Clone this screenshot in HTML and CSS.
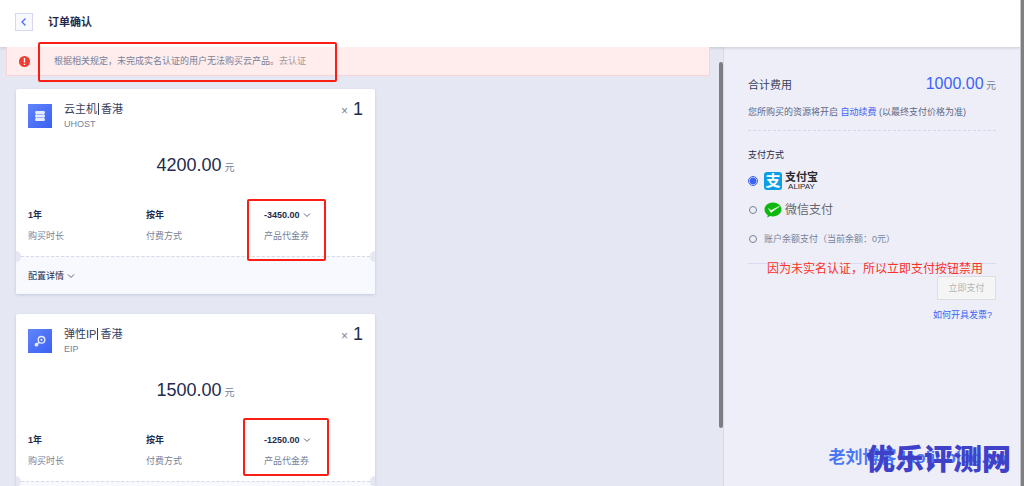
FILE: index.html
```html
<!DOCTYPE html>
<html lang="zh-CN">

<head>
    <meta charset="UTF-8">
    <meta name="viewport" content="width=device-width, initial-scale=1.0">
    <title>订单确认</title>
    <link rel="stylesheet" href="styles.css">
</head>

<body>
    <div class="page">
        <div class="header">
            <button type="button" class="back" aria-label="返回">
                <svg width="8" height="10" viewBox="0 0 8 10"><path d="M5.5 1.5 2 5l3.5 3.5" fill="none" stroke="#4a70f5" stroke-width="1.3"/></svg>
            </button>
            <h1>订单确认</h1>
        </div>
        <div class="container">
            <!-- 左侧订单列表 -->
            <div class="main">
                <div class="alert">
                    <svg class="alert-icon" width="11" height="11" viewBox="0 0 11 11"><circle cx="5.5" cy="5.5" r="5.5" fill="#f23c32"/><path d="M5.5 2v4.600M5.5 7.700v1.200" stroke="#fff" stroke-width="1.4"/></svg>
                    <p>根据相关规定，未完成实名认证的用户无法购买云产品。<a href="#">去认证</a></p>
                    <div class="mark mark-alert"></div>
                </div>
                <div class="list">
                    <div class="card">
                        <div class="card-body">
                            <div class="card-head">
                                <div class="icon">
                                    <svg width="24" height="24" viewBox="0 0 24 24"><g fill="#e6ecff"><rect x="7" y="7" width="10" height="3" rx="1.5"/><rect x="7" y="10.500" width="10" height="3" rx="1.500"/><rect x="7" y="14" width="10" height="3" rx="1.500"/></g><path d="M8.500 7v10M15.500 7v10" stroke="#e6ecff" stroke-width="1.200" opacity=".7"/></svg>
                                </div>
                                <div class="name">
                                    <h2>云主机<i></i>香港</h2>
                                    <p>UHOST</p>
                                </div>
                                <div class="count"><span>×</span> 1</div>
                            </div>
                            <div class="price">4200.00 <span>元</span></div>
                            <div class="info">
                                <div><b>1年</b><p>购买时长</p></div>
                                <div><b>按年</b><p>付费方式</p></div>
                                <div class="coupon">
                                    <button type="button">-3450.00 <svg width="8" height="6" viewBox="0 0 8 6"><path d="M1 1.500 4 4.500 7 1.500" fill="none" stroke="#5c6784"/></svg></button>
                                    <p>产品代金券</p>
                                    <div class="mark mark-host"></div>
                                </div>
                            </div>
                        </div>
                        <div class="card-foot">
                            <button type="button">配置详情 <svg width="8" height="6" viewBox="0 0 8 6"><path d="M1 1.500 4 4.500 7 1.500" fill="none" stroke="#5c6784"/></svg></button>
                        </div>
                    </div>
                    <div class="card">
                        <div class="card-body">
                            <div class="card-head">
                                <div class="icon">
                                    <svg width="24" height="24" viewBox="0 0 24 24"><g fill="none" stroke="#e6ecff" stroke-width="1.4"><circle cx="13.500" cy="10.800" r="3.300"/><path d="M11.100 13.200 8.500 15.500"/></g><circle cx="13.500" cy="10.800" r="1.100" fill="#e6ecff"/><circle cx="8.500" cy="15.700" r="1.900" fill="#e6ecff"/></svg>
                                </div>
                                <div class="name">
                                    <h2>弹性IP<i></i>香港</h2>
                                    <p>EIP</p>
                                </div>
                                <div class="count"><span>×</span> 1</div>
                            </div>
                            <div class="price">1500.00 <span>元</span></div>
                            <div class="info">
                                <div><b>1年</b><p>购买时长</p></div>
                                <div><b>按年</b><p>付费方式</p></div>
                                <div class="coupon">
                                    <button type="button">-1250.00 <svg width="8" height="6" viewBox="0 0 8 6"><path d="M1 1.500 4 4.500 7 1.500" fill="none" stroke="#5c6784"/></svg></button>
                                    <p>产品代金券</p>
                                    <div class="mark mark-eip"></div>
                                </div>
                            </div>
                        </div>
                        <div class="card-foot"></div>
                    </div>
                </div>
                <div class="scroll-thumb"></div>
            </div>
            <!-- 右侧支付 -->
            <div class="side">
                <div class="total">
                    <h2>合计费用</h2>
                    <div class="sum">1000.00 <span>元</span></div>
                </div>
                <p class="note">您所购买的资源将开启 <a href="#">自动续费</a> (以最终支付价格为准)</p>
                <div class="pay">
                    <h3>支付方式</h3>
                    <label>
                        <input type="radio" name="pay" checked>
                        <span class="alipay-logo">支</span>
                        <span class="alipay-name"><b>支付宝</b><small>ALIPAY</small></span>
                    </label>
                    <label>
                        <input type="radio" name="pay">
                        <svg width="18" height="16" viewBox="0 0 18 16"><path d="M9 .5C4.300.5.500 3.600.500 7.500c0 2.300 1.200 4.200 3.200 5.500L3.200 15.500l2.900-1.500c.9.300 1.900.4 2.900.4 4.700 0 8.500-3.100 8.500-6.900S13.700.5 9 .5z" fill="#0fb80f"/><path d="M4.500 6.500 7 8.500l8.500-4.200L7 10.500z" fill="#fff" stroke="#fff" stroke-width=".5"/></svg>
                        <span class="wechat-name">微信支付</span>
                    </label>
                    <label>
                        <input type="radio" name="pay">
                        <span>账户余额支付（当前余额：0元）</span>
                    </label>
                </div>
                <div class="submit">
                    <p class="tip">因为未实名认证，所以立即支付按钮禁用</p>
                    <button type="button" disabled>立即支付</button>
                    <a href="#">如何开具发票?</a>
                </div>
            </div>
            <div class="watermark">
                <span>老刘博客 laoliublog.cn</span>
                <strong>优乐评测网</strong>
            </div>
        </div>
        <div class="page-bar"></div>
    </div>
</body>

</html>
```
FILE: styles.css
```css
* {
    margin: 0;
    padding: 0;
    box-sizing: border-box;
}

body {
    font-family: "Liberation Sans", "Noto Sans CJK SC", sans-serif;
    font-size: 9px;
    line-height: 16px;
    color: #76829b;
    background-color: #e5e8f3;
}

a {
    text-decoration: none;
    color: #3b63f6;
}

button {
    font: inherit;
    color: #1f2b4d;
    border: 0;
    background: none;
}

svg {
    flex: none;
}

.page {
    position: relative;
    display: flex;
    flex-direction: column;
    height: 100vh;
    overflow: hidden;
}

.header {
    position: relative;
    display: flex;
    align-items: center;
    height: 47px;
    padding: 0 15px 3px;
    background-color: #fff;
    box-shadow: 0 1px 3px rgba(0, 0, 0, .15);
}

.header h1 {
    margin-left: 15px;
    font-size: 11px;
    color: #1f2b4d;
}

.back {
    display: flex;
    align-items: center;
    justify-content: center;
    width: 18px;
    height: 18px;
    border: 1px solid #d5d8ee;
    background-color: #f8f9ff;
}

.container {
    display: flex;
    flex: 1;
    min-height: 0;
    padding-right: 4px;
}

.main {
    position: relative;
    flex: 1;
    padding: 0 13px 0 6px;
}

.alert {
    position: relative;
    display: flex;
    align-items: center;
    height: 29px;
    padding-left: 12px;
    border: 1px solid #fbd3d6;
    border-top: 0;
    background-color: #ffecec;
}

.alert p {
    margin-left: 24px;
}

.alert a {
    color: #a09c9c;
}

/* 红色标注框 */
.mark {
    position: absolute;
    z-index: 2;
    border: 2px solid #fa1e14;
    border-radius: 2px;
}

.mark-alert {
    top: -5px;
    left: 31px;
    width: 299px;
    height: 40px;
}

.mark-host {
    top: -8px;
    left: -17px;
    width: 79px;
    height: 62px;
}

.mark-eip {
    top: -14px;
    left: -21px;
    width: 86px;
    height: 58px;
}

.list {
    display: flex;
    flex-direction: column;
    gap: 20px;
    padding: 13px 10px;
}

.card {
    flex: none;
    width: 100%;
    max-width: 359px;
    border-radius: 2px;
    background-color: #fff;
    box-shadow: 0 1px 3px rgba(60, 70, 130, .2);
}

.card-body {
    padding: 12px;
}

.card-head {
    display: flex;
}

.icon {
    width: 24px;
    height: 24px;
    margin-top: 3px;
    background: linear-gradient(135deg, #6285fb, #3a60f2);
}

.name {
    flex: 1;
    margin-left: 12px;
    line-height: 14px;
}

.name h2 {
    display: flex;
    align-items: center;
    font-size: 11px;
    font-weight: normal;
    line-height: 16px;
    color: #35405e;
}

.name i {
    width: 1px;
    height: 12px;
    margin: 0 2px 0 1px;
    background-color: #35405e;
}

.count {
    font-size: 18px;
    color: #1f2b4d;
}

.count span {
    font-size: 12px;
    color: #76829b;
}

.price {
    height: 24px;
    margin-top: 22px;
    font-size: 18px;
    line-height: 24px;
    text-align: center;
    color: #1f2b4d;
}

.price span,
.sum span {
    margin-left: -2px;
    font-size: 10px;
    color: #76829b;
}

.info {
    display: grid;
    grid-template-columns: 118px 118px 1fr;
    margin-top: 30px;
}

.info b {
    display: block;
    color: #1f2b4d;
}

.info p {
    margin-top: 5px;
}

.coupon {
    position: relative;
}

.coupon button {
    display: flex;
    align-items: center;
    gap: 3px;
    font-weight: bold;
}

.card-foot {
    position: relative;
    height: 38px;
    padding: 11px 12px;
    border-top: 1px dashed #d5d9e8;
    border-radius: 0 0 2px 2px;
    background-color: #f8f9ff;
}

.card-foot button {
    display: flex;
    align-items: center;
    gap: 3px;
}

/* 票据两侧缺口 */
.card-foot::before,
.card-foot::after {
    content: "";
    position: absolute;
    top: -6px;
    left: 0;
    width: 5px;
    height: 11px;
    border-radius: 0 6px 6px 0;
    background-color: #e5e8f3;
}

.card-foot::after {
    left: auto;
    right: 0;
    border-radius: 6px 0 0 6px;
}

.scroll-thumb {
    position: absolute;
    top: 15px;
    right: 0;
    width: 4px;
    height: 366px;
    border-radius: 2px;
    background-color: #7c7e83;
}

.side {
    width: 297px;
    padding: 26px 24px 0;
    border-left: 1px solid #d6d9ea;
    background-color: #eeeef8;
}

.total {
    display: flex;
    align-items: center;
    justify-content: space-between;
    height: 24px;
}

.total h2 {
    font-size: 11px;
    font-weight: normal;
    color: #35405e;
}

.sum {
    font-size: 16px;
    color: #3b63f6;
}

.note {
    margin-top: 7px;
    padding-bottom: 10px;
    border-bottom: 1px dashed #d3d6f0;
    color: #5c6784;
}

.pay {
    padding: 16px 0 10px;
    border-bottom: 1px solid #d9dbf0;
}

.pay h3 {
    margin-bottom: 3px;
    font-size: 9px;
    font-weight: normal;
    color: #1f2b4d;
}

.pay label {
    display: flex;
    align-items: center;
    height: 29px;
}

.pay input {
    appearance: none;
    width: 8px;
    height: 8px;
    margin: 0 7px 0 1px;
    border: 1px solid #76829b;
    border-radius: 50%;
}

.pay input:checked {
    width: 10px;
    height: 10px;
    margin: 0 6px 0 0;
    border-color: #3b63f6;
    background: radial-gradient(#3b63f6 0 3px, #fff 4px);
}

.alipay-logo {
    width: 18px;
    height: 18px;
    border-radius: 3px;
    font-size: 15px;
    font-weight: bold;
    line-height: 17px;
    text-align: center;
    color: #fff;
    background-color: #0a9ee6;
}

.alipay-name {
    display: flex;
    flex-direction: column;
    margin-left: 3px;
    color: #2b2b2e;
}

.alipay-name b {
    font-size: 11px;
    line-height: 12px;
}

.alipay-name small {
    font-size: 8px;
    line-height: 8px;
    text-align: center;
}

.wechat-name {
    margin-left: 3px;
    font-size: 12px;
    color: #66676c;
}

.submit {
    position: relative;
    display: flex;
    flex-direction: column;
    align-items: flex-end;
    padding-top: 12px;
}

.submit button {
    width: 59px;
    height: 24px;
    border: 1px solid #dedee2;
    color: #b5b5b8;
    background-color: #f5f5f6;
}

.submit a {
    margin: 7px 4px 0 0;
}

.tip {
    position: absolute;
    top: -3px;
    right: 13px;
    font-size: 12px;
    white-space: nowrap;
    color: #fa3228;
}

/* 水印 */
.watermark {
    position: absolute;
    right: 13px;
    bottom: 8px;
    font-weight: bold;
    white-space: nowrap;
}

.watermark strong {
    position: relative;
    font-size: 29px;
    line-height: 36px;
    color: #3f42c9;
}

.watermark span {
    position: absolute;
    top: 6px;
    right: 5px;
    font-size: 17px;
    line-height: 20px;
    color: #4a78f5;
}

.page-bar {
    position: absolute;
    top: 0;
    right: 0;
    bottom: 0;
    width: 4px;
    border-left: 1px solid #c4c4c8;
    background-color: #808082;
}
```
